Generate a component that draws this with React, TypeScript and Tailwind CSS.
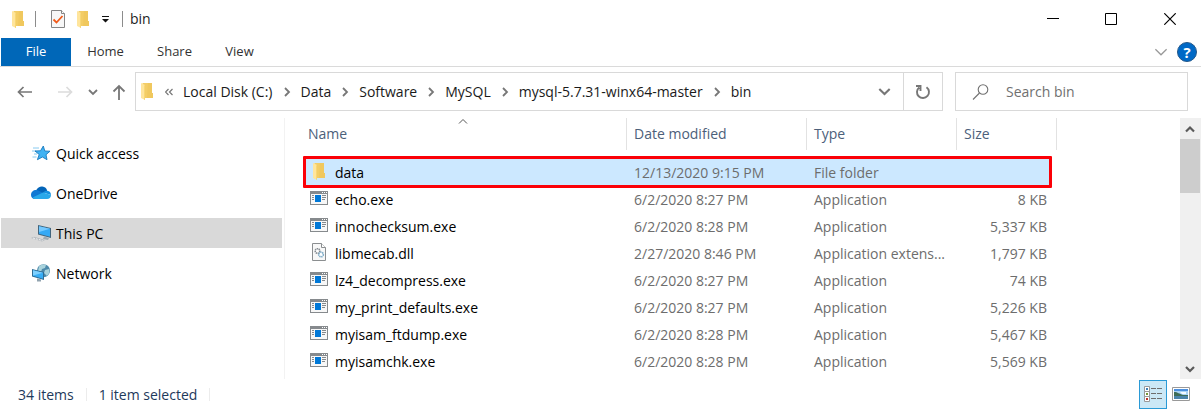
import React, { Fragment } from "react";

type FileKind = "folder" | "exe" | "dll";

const files: { name: string; kind: FileKind; date: string; type: string; size: string }[] = [
  { name: "data", kind: "folder", date: "12/13/2020 9:15 PM", type: "File folder", size: "" },
  { name: "echo.exe", kind: "exe", date: "6/2/2020 8:27 PM", type: "Application", size: "8 KB" },
  { name: "innochecksum.exe", kind: "exe", date: "6/2/2020 8:28 PM", type: "Application", size: "5,337 KB" },
  { name: "libmecab.dll", kind: "dll", date: "2/27/2020 8:46 PM", type: "Application extens...", size: "1,797 KB" },
  { name: "lz4_decompress.exe", kind: "exe", date: "6/2/2020 8:27 PM", type: "Application", size: "74 KB" },
  { name: "my_print_defaults.exe", kind: "exe", date: "6/2/2020 8:27 PM", type: "Application", size: "5,226 KB" },
  { name: "myisam_ftdump.exe", kind: "exe", date: "6/2/2020 8:28 PM", type: "Application", size: "5,467 KB" },
  { name: "myisamchk.exe", kind: "exe", date: "6/2/2020 8:28 PM", type: "Application", size: "5,569 KB" },
];

const path = ["Local Disk (C:)", "Data", "Software", "MySQL", "mysql-5.7.31-winx64-master", "bin"];

function FolderIcon() {
  return (
    <svg width="12" height="17" viewBox="0 0 12 17" aria-hidden="true">
      <path d="M1 0h10v10h1v5H2V1z" fill="#f3cd66" />
      <path d="M7 0h4v10h1v5H6z" fill="#efc458" opacity=".6" />
      <path d="M0 0l4 2v15l-4-2z" fill="#ffe59c" />
      <path d="M3 2l1 .5V17l-1-.5z" fill="#f8d775" />
    </svg>
  );
}

function ExeIcon() {
  return (
    <svg width="18" height="14" viewBox="0 0 18 14" aria-hidden="true">
      <path d="M0 0h18v14H0z" fill="#868a8d" />
      <path d="M1 3h16v10H1z" fill="#f7f7f7" />
      <path d="M12 1h1v1h-1zM14 1h1v1h-1zM16 1h1v1h-1z" fill="#fff" />
      <path d="M5 4h6v7H5z" fill="#0078d7" />
      <path d="M2 4h2v1H2zM2 6h2v1H2zM2 8h2v1H2zM12 4h4v1h-4zM12 6h4v1h-4zM12 8h3v1h-3z" fill="#85898c" />
    </svg>
  );
}

function DllIcon() {
  return (
    <svg width="14" height="18" viewBox="0 0 14 18" aria-hidden="true">
      <path d="M.5.5h9l4 4v13H.5z" fill="#f8f8f8" stroke="#8b8e90" />
      <path d="M9.500.5v4h4" fill="#fff" stroke="#8b8e90" />
      <circle cx="5.500" cy="8" r="2.300" fill="#fff" stroke="#858b91" strokeWidth="1.600" strokeDasharray="1.300 .5" />
      <circle cx="9" cy="11.500" r="2.300" fill="#fff" stroke="#7caac6" strokeWidth="1.600" strokeDasharray="1.300 .5" />
    </svg>
  );
}

const fileIcons: Record<FileKind, React.ReactNode> = {
  folder: <FolderIcon />,
  exe: <ExeIcon />,
  dll: <DllIcon />,
};

function StarIcon() {
  return (
    <svg width="20" height="18" viewBox="0 0 20 18" aria-hidden="true">
      <path d="M2 4h6M1 7h4M3 10h3M1.500 13h4" stroke="#7cc4ee" strokeWidth=".9" />
      <path d="M12.300 2l1.500 5 5.200.2-4 3.500 1 5-4.600-2.700-5 2.700 1.800-5.200L4 7l5.500-.2z" fill="#3fb2f3" stroke="#1979bd" strokeWidth=".9" />
    </svg>
  );
}

function CloudIcon() {
  return (
    <svg width="20" height="14" viewBox="0 0 20 14" aria-hidden="true">
      <path d="M5 4.500C6.500 1.500 9 .4 11.300.6c2.700.2 4.300 1.900 4.900 4.100L9 9z" fill="#0364b8" />
      <path d="M0 9c0-3 2.300-5 5-5 2.200 0 3.300.9 7 3l-8 6H4c-2.600 0-4-1.700-4-4z" fill="#0f78d4" />
      <path d="M12 6.500c1.300-1.300 2.800-1.900 4.200-1.800 2.400.2 3.800 2 3.800 4.300z" fill="#1490df" />
      <path d="M1.500 11.500L12 6.500 20 9c0 2.400-1.600 4-4 4H4c-1 0-1.900-.6-2.500-1.500z" fill="#28a8ea" />
    </svg>
  );
}

function ComputerIcon() {
  return (
    <svg width="20" height="18" viewBox="0 0 20 18" aria-hidden="true">
      <path d="M7 1l13 3v10L7 10.500z" fill="#41657d" />
      <path d="M8 2.200l11 2.600v8L8 9.800z" fill="#35a9f5" />
      <path d="M8 2.200l11 2.600L8 8z" fill="#75c9ff" />
      <path d="M13 12.500l5 1.500-1 2-5-1z" fill="#9fabb3" />
      <path d="M0 14l3-1.200 11 3.200-3 1.500z" fill="#b4babf" />
      <path d="M2 14l9.500 2.500" stroke="#f4f4f4" strokeDasharray="2 1" />
    </svg>
  );
}

function NetworkIcon() {
  return (
    <svg width="20" height="18" viewBox="0 0 20 18" aria-hidden="true">
      <circle cx="12.500" cy="6.700" r="6.500" fill="#4c89aa" />
      <path d="M8 2.500c2-2 5-2.300 7-1.500l-1 3-3 1-1 3-3-1zM14 6l4-1c1 3 0 5-2 7l-3-3z" fill="#a9d3dc" />
      <path d="M1 5l12 3v8L1 12.500z" fill="#2e6c95" />
      <path d="M2 6.300l10 2.500v6L2 11.800z" fill="#36adf5" />
      <path d="M2 6.300l10 2.500-10 2.700z" fill="#7dd0ff" />
      <path d="M6 14.500l4 1v2H6z" fill="#91a3af" />
    </svg>
  );
}

function Chevron({ direction, size = 10, width = 1.6, className = "" }: { direction: "up" | "down" | "right"; size?: number; width?: number; className?: string }) {
  const shapes = { up: "M1 7.500l4-4 4 4", down: "M1 3l4 4 4-4", right: "M3 1l4 4-4 4" };
  return (
    <svg width={size} height={size} viewBox="0 0 10 10" fill="none" stroke="currentColor" strokeWidth={width} className={className} aria-hidden="true">
      <path d={shapes[direction]} />
    </svg>
  );
}

function TitleBar() {
  return (
    <header className="flex h-[38px] items-center">
      <div className="flex items-center pl-3">
        <FolderIcon />
        <span className="ml-[11px] h-4 w-px bg-[#8c8c8c]" />
        <button aria-label="Properties" className="ml-[15px]">
          <svg width="14" height="18" viewBox="0 0 14 18" aria-hidden="true">
            <path d="M.5.5h10l3 3v14H.5z" fill="#f7f7f7" stroke="#858585" />
            <path d="M10.500.5v3h3" fill="#fff" stroke="#858585" />
            <path d="M2.500 9.500l3 3 6-6.500" fill="none" stroke="#f05a1a" strokeWidth="1.800" />
          </svg>
        </button>
        <button aria-label="New folder" className="ml-3"><FolderIcon /></button>
        <button aria-label="Customize toolbar" className="ml-3">
          <svg width="8" height="7" viewBox="0 0 8 7" aria-hidden="true"><path d="M1 0h7v1H1zM1 3h7L4.500 6.500z" fill="#111" /></svg>
        </button>
        <span className="ml-[13px] h-4 w-px bg-[#8c8c8c]" />
        <h1 className="ml-[7px] text-[14px] leading-5 text-[#222]">bin</h1>
      </div>
      <div className="ml-auto flex h-full pr-px text-black">
        <button aria-label="Minimize" className="flex w-[58px] items-center justify-center">
          <svg width="12" height="12" viewBox="0 0 12 12" aria-hidden="true"><path d="M0 5h12v1H0z" fill="currentColor" /></svg>
        </button>
        <button aria-label="Maximize" className="flex w-[58px] items-center justify-center">
          <svg width="12" height="12" viewBox="0 0 12 12" aria-hidden="true"><path d="M.5.5h11v11H.5z" fill="none" stroke="currentColor" /></svg>
        </button>
        <button aria-label="Close" className="flex w-[60px] items-center justify-center">
          <svg width="12" height="12" viewBox="0 0 12 12" aria-hidden="true"><path d="M.3.3l11.400 11.400M11.700.3L.3 11.700" stroke="currentColor" strokeWidth="1.200" /></svg>
        </button>
      </div>
    </header>
  );
}

function Ribbon() {
  return (
    <nav className="flex h-[29px] items-stretch border-b border-[#dadada] pl-px text-[13px] text-[#333]">
      <a href="#file" className="flex w-[70px] items-center justify-center bg-[#0067b8] text-white">File</a>
      <a href="#home" className="flex w-[69px] items-center justify-center">Home</a>
      <a href="#share" className="flex w-[69px] items-center justify-center">Share</a>
      <a href="#view" className="flex w-[61px] items-center justify-center">View</a>
      <div className="ml-auto flex items-center gap-[9px] pr-1">
        <button aria-label="Expand ribbon"><Chevron direction="down" size={14} width={0.9} className="text-[#999]" /></button>
        <button aria-label="Help" className="flex size-5 items-center justify-center rounded-full border border-[#24588a] bg-[#0069c6] text-[15px] leading-none font-bold text-white">?</button>
      </div>
    </nav>
  );
}

function AddressRow() {
  return (
    <div className="flex items-center pt-[5px] pr-[13px] pb-[7px] text-[#777]">
      <div className="flex w-[135px] shrink-0 items-center">
        <button aria-label="Back" className="ml-[17px]">
          <svg width="16" height="14" viewBox="0 0 16 14" fill="none" stroke="currentColor" strokeWidth="1.700" aria-hidden="true"><path d="M15 7H1.500M6.500 2l-5 5 5 5" /></svg>
        </button>
        <button aria-label="Forward" disabled className="ml-6 text-[#dcdcdc]">
          <svg width="16" height="14" viewBox="0 0 16 14" fill="none" stroke="currentColor" strokeWidth="1.700" aria-hidden="true"><path d="M1 7h13.500M9.500 2l5 5-5 5" /></svg>
        </button>
        <button aria-label="Recent locations" className="ml-[15px]"><Chevron direction="down" width={1.8} /></button>
        <button aria-label="Up" className="ml-[14px]">
          <svg width="14" height="16" viewBox="0 0 14 16" fill="none" stroke="currentColor" strokeWidth="1.800" aria-hidden="true"><path d="M7 16V2M1.500 7.500L7 2l5.500 5.500" /></svg>
        </button>
      </div>
      <div className="flex h-[39px] min-w-0 flex-1 items-stretch border border-[#d9d9d9]">
        <div className="flex min-w-0 flex-1 items-center pl-[5px]">
          <FolderIcon />
          <svg width="8" height="8" viewBox="0 0 8 8" fill="none" stroke="currentColor" strokeWidth="1.200" className="mr-[10px] ml-3" aria-hidden="true"><path d="M3.500 1l-3 3 3 3M7.500 1l-3 3 3 3" /></svg>
          {path.map((part, i) => (
            <Fragment key={part}>
              {i > 0 && <Chevron direction="right" width={1.8} className="mx-[9px] shrink-0" />}
              <a href="#path" className="whitespace-nowrap text-[14px] text-[#1a1a1a]">{part}</a>
            </Fragment>
          ))}
        </div>
        <button aria-label="Previous locations" className="px-3"><Chevron direction="down" size={13} width={1.6} /></button>
        <button aria-label="Refresh" className="flex w-[39px] items-center justify-center border-l border-[#d9d9d9]">
          <svg width="16" height="16" viewBox="0 0 16 16" fill="none" stroke="currentColor" strokeWidth="1.900" aria-hidden="true"><path d="M11.500 3.200A6 6 0 1 1 4.200 3.400M1 2h4.500v5" /></svg>
        </button>
      </div>
      <label className="ml-3 flex h-[39px] w-[233px] shrink-0 items-center border border-[#d9d9d9] pl-4">
        <svg width="17" height="16" viewBox="0 0 17 16" fill="none" stroke="#707070" strokeWidth="1.100" aria-hidden="true"><circle cx="11" cy="5.500" r="4.800" /><path d="M7.500 9L1 15.500" /></svg>
        <input type="search" aria-label="Search bin" placeholder="Search bin" className="ml-[17px] min-w-0 flex-1 text-[14px] outline-none placeholder:text-[#707070]" />
      </label>
    </div>
  );
}

const places = [
  { label: "Quick access", icon: <StarIcon /> },
  { label: "OneDrive", icon: <CloudIcon /> },
  { label: "This PC", icon: <ComputerIcon />, active: true },
  { label: "Network", icon: <NetworkIcon /> },
];

function Sidebar() {
  return (
    <nav aria-label="Places" className="w-[285px] shrink-0 border-r border-[#f2f2f2] pt-[20px] pr-[2px] pl-px">
      <ul className="flex flex-col gap-[10px]">
        {places.map((p) => (
          <li key={p.label}>
            <a href="#place" className={`flex h-[30px] items-center gap-[5px] pl-[30px] text-[14px] text-black ${p.active ? "bg-[#d9d9d9]" : ""}`}>
              {p.icon}
              {p.label}
            </a>
          </li>
        ))}
      </ul>
    </nav>
  );
}

function FileTable() {
  const head = "h-8 border-r border-[#e2e2e2] p-0 pl-[7px] text-left font-normal";
  return (
    <div className="min-w-0 flex-1 pb-1 pl-[18px]">
      <table className="w-[754px] table-fixed border-separate border-spacing-0 text-[14px] leading-5">
        <colgroup>
          <col className="w-[324px]" />
          <col className="w-[180px]" />
          <col className="w-[150px]" />
          <col className="w-[94px]" />
          <col className="w-[6px]" />
        </colgroup>
        <thead className="text-[#4c607a]">
          <tr>
            <th scope="col" aria-sort="ascending" className="relative h-8 border-r border-[#e2e2e2] p-0 pl-[5px] text-left font-normal">
              Name
              <Chevron direction="up" width={1} className="absolute -top-[2px] left-[155px] text-[#555]" />
            </th>
            <th scope="col" className={head}>Date modified</th>
            <th scope="col" className={head}>Type</th>
            <th scope="col" colSpan={2} className={head}>Size</th>
          </tr>
        </thead>
        <tbody className="text-[#6d6d6d]">
          <tr aria-hidden="true"><td colSpan={5} className="h-[9px] p-0" /></tr>
          {files.map((f, i) => {
            const fill = i === 0 ? "bg-[#cce8ff]" : "";
            return (
              <tr key={f.name} className="relative h-[27px]" aria-selected={i === 0}>
                <td className={`p-0 text-black ${fill}`}>
                  <div className="flex items-center">
                    <span className="flex w-8 justify-center pr-px pb-[3px]">{fileIcons[f.kind]}</span>
                    {f.name}
                  </div>
                  {i === 0 && <span className="absolute -top-[3px] right-[5px] -bottom-[2px] left-0 rounded-[1px] border-3 border-[#fb0007]" />}
                </td>
                <td className={`p-0 pl-[7px] ${fill}`}>{f.date}</td>
                <td className={`p-0 pl-[7px] whitespace-nowrap ${fill}`}>{f.type}</td>
                <td className={`p-0 pr-1 text-right ${fill}`}>{f.size}</td>
                <td className="p-0" />
              </tr>
            );
          })}
        </tbody>
      </table>
    </div>
  );
}

function ScrollBar() {
  return (
    <div className="flex w-[21px] shrink-0 flex-col bg-[#f0f0f0] text-[#5a5a5a]">
      <button aria-label="Scroll up" className="flex h-[21px] items-center justify-center pr-[2px]"><Chevron direction="up" width={2.2} /></button>
      <div className="mr-px h-[54px] bg-[#cdcdcd]" />
      <button aria-label="Scroll down" className="mt-auto flex h-[21px] items-center justify-center pr-[2px]"><Chevron direction="down" width={2.2} /></button>
    </div>
  );
}

function StatusBar() {
  return (
    <footer className="flex h-[30px] items-center pr-[11px] pl-[18px] text-[14px] text-[#1e395b]">
      <span>34 items</span>
      <span className="mr-3 ml-3 h-[13px] w-px bg-[#ececec]" />
      <span>1 item selected</span>
      <span className="ml-3 h-[13px] w-px bg-[#ececec]" />
      <div className="ml-auto flex items-center">
        <button aria-label="Details view" aria-pressed="true" className="flex h-[29px] w-7 items-center justify-center border border-[#2a9ad6] bg-[#cbe8f6]">
          <svg width="18" height="16" viewBox="0 0 18 16" aria-hidden="true">
            <path d="M.5.5h5v5h-5zM.5 5.500h5v5h-5zM.5 10.500h5v5h-5z" fill="#fff" stroke="#999" />
            <path d="M2 2h2v2H2z" fill="#3d7eb5" /><path d="M2 7h2v2H2z" fill="#779535" /><path d="M2 12h2v2H2z" fill="#c03128" />
            <path d="M7 2h5v1H7zM13 2h5v1h-5zM7 7h5v1H7zM13 7h5v1h-5zM7 12h5v1H7zM13 12h5v1h-5z" fill="#6e6e6e" />
          </svg>
        </button>
        <button aria-label="Large icons view" className="ml-[5px]">
          <svg width="18" height="14" viewBox="0 0 18 14" aria-hidden="true">
            <path d="M.5.5h17v13H.5z" fill="#fff" stroke="#999" />
            <path d="M2 2h14v10H2z" fill="#a8d2f5" /><path d="M2 2h14v2H2z" fill="#4c90df" />
            <path d="M2 5c4 0 5 2 9 3h5v2H2z" fill="#3e6c56" /><path d="M2 9h14v3H2z" fill="#4a83aa" /><path d="M8 5h6v2h-4z" fill="#f4faff" />
          </svg>
        </button>
      </div>
    </footer>
  );
}

export default function App() {
  return (
    <div className="min-h-screen bg-white font-['Open_Sans','Noto_Sans',sans-serif]">
      <TitleBar />
      <Ribbon />
      <AddressRow />
      <main className="flex">
        <Sidebar />
        <FileTable />
        <ScrollBar />
      </main>
      <StatusBar />
    </div>
  );
}
